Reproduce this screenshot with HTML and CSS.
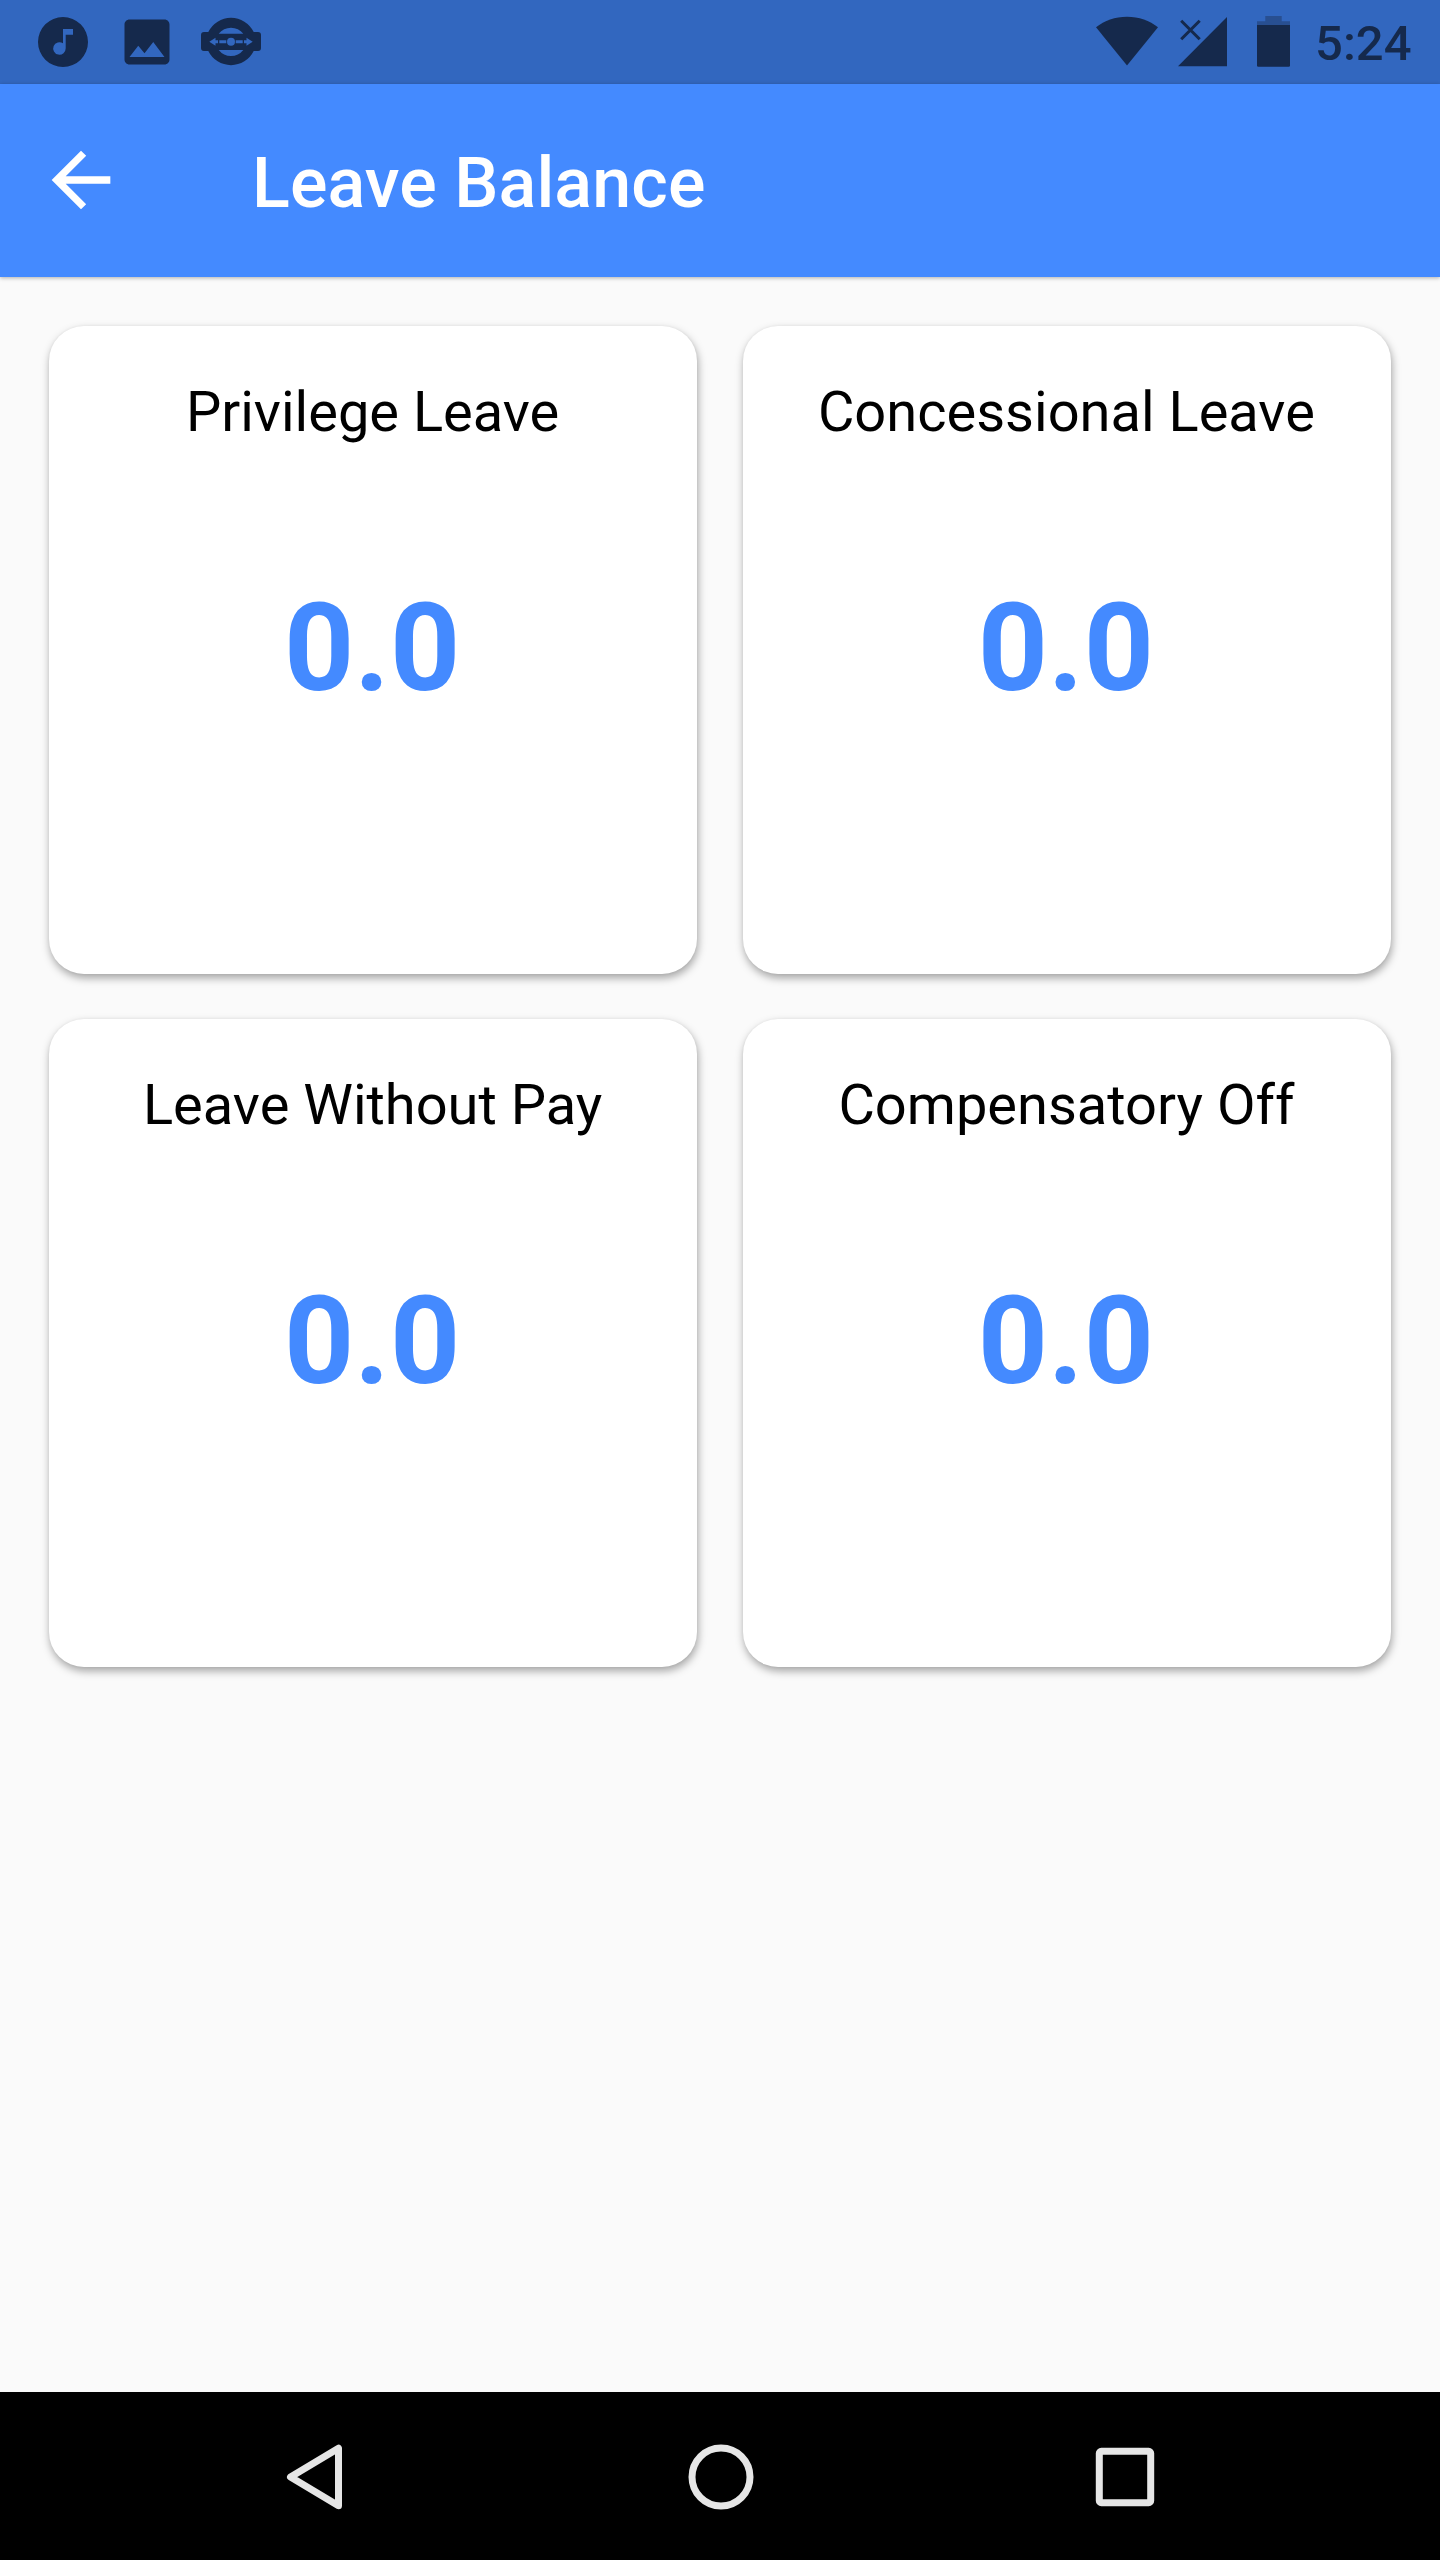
FILE: index.html
```html
<!DOCTYPE html>
<html lang="en">
<head>
<meta charset="utf-8">
<title>Leave Balance</title>
<link rel="stylesheet" href="styles.css">
</head>
<body>
<div class="screen">
  <div class="status-bar">
    <div class="notifications">
      <svg width="60" height="60" viewBox="0 0 60 60"><path fill-rule="evenodd" d="M30 5a25 25 0 1 0 0 50a25 25 0 1 0 0-50zM30 17h10v5.8h-7.3V36.3A6.25 6.25 0 1 1 30 31.3z"/></svg>
      <svg width="60" height="60" viewBox="0 0 24 24"><path d="M21 19V5c0-1.1-.9-2-2-2H5c-1.100 0-2 .9-2 2v14c0 1.100.9 2 2 2h14c1.100 0 2-.9 2-2zM8.500 13.500l2.500 3.010L14.500 12l4.500 6H5l3.500-4.500z"/></svg>
      <svg width="60" height="60" viewBox="0 0 60 60"><path fill-rule="evenodd" d="M7.300 20A25.300 25.300 0 0 1 52.700 20H57a3 3 0 0 1 3 3V36a3 3 0 0 1-3 3H52.700A25.300 25.300 0 0 1 7.300 39H3a3 3 0 0 1-3-3V23a3 3 0 0 1 3-3zM17.700 21.700H42.300A15.500 15.500 0 0 0 17.700 21.700zM17.700 38H42.300A15.500 15.500 0 0 1 17.700 38z"/><g class="cutout"><path d="M8.300 29.700l6.200-4v2.500h2.500v3h-2.500v2.500zM51.700 29.700l-6.200-4v2.500h-2.500v3h2.500v2.500zM18.300 28.200h7v3h-7zM34.700 28.200h7v3h-7z"/><circle cx="30" cy="29.700" r="4"/></g></svg>
    </div>
    <div class="indicators">
      <svg width="62" height="50" viewBox="0 0 62 50"><path d="M31 49.500L0 11.200C8.500 4.500 19 .7 31 .7S53.500 4.500 62 11.200z"/></svg>
      <svg class="signal" width="49" height="50" viewBox="0 0 49 50"><path d="M49 0V49.300H0z"/><path class="cross" d="M3.200 3.800L21.700 22.300M21.700 3.800L3.200 22.300"/></svg>
      <svg class="battery" width="33" height="51" viewBox="0 0 33 51"><path class="drained" d="M8.300 0H24.700V5.300H33V9H0V5.300H8.300z"/><path d="M0 9H33V49.500a1.300 1.300 0 0 1-1.300 1.300H1.300A1.300 1.300 0 0 1 0 49.500z"/></svg>
      <span class="clock">5:24</span>
    </div>
  </div>
  <header class="app-bar">
    <svg class="back" width="88" height="88" viewBox="0 0 24 24"><path d="M20 11H7.830l5.590-5.590L12 4l-8 8 8 8 1.410-1.410L7.830 13H20v-2z"/></svg>
    <h1 class="title">Leave Balance</h1>
  </header>
  <main class="balances">
    <section class="card"><h2 class="label">Privilege Leave</h2><p class="value">0.0</p></section>
    <section class="card"><h2 class="label">Concessional Leave</h2><p class="value">0.0</p></section>
    <section class="card"><h2 class="label">Leave Without Pay</h2><p class="value">0.0</p></section>
    <section class="card"><h2 class="label">Compensatory Off</h2><p class="value">0.0</p></section>
  </main>
  <nav class="nav-bar">
    <svg width="66" height="66" viewBox="0 0 66 66"><path d="M55.500 4.300V61.700L7.500 33z"/></svg>
    <svg width="66" height="66" viewBox="0 0 66 66"><circle cx="33" cy="33" r="29"/></svg>
    <svg width="66" height="66" viewBox="0 0 66 66"><rect x="7.300" y="7.300" width="51.400" height="51.400" rx="2"/></svg>
  </nav>
</div>
</body>
</html>
```
FILE: styles.css
```css
* {
  box-sizing: border-box;
  margin: 0;
}

body {
  background: #fafafa;
  font-family: Roboto, sans-serif;
}

svg {
  display: block;
  flex: none;
}

.screen {
  display: flex;
  flex-direction: column;
  width: 1440px;
  height: 2560px;
}

.status-bar {
  display: flex;
  justify-content: space-between;
  height: 84px;
  padding: 12px 28.5px 0 33px;
  background: #3267bf;
  color: #15294c;
  fill: #15294c;
}

.notifications {
  display: flex;
  gap: 24px;
}

.cutout {
  fill: #3267bf;
}

.indicators {
  display: flex;
  align-items: flex-start;
  padding-top: 4px;
}

.signal {
  margin: 1px 0 0 20px;
}

.cross {
  fill: none;
  stroke: #15294c;
  stroke-width: 3;
}

.battery {
  margin: 0 25px 0 30px;
}

.drained {
  fill: #284f91;
}

.clock {
  font-size: 49px;
  font-weight: 500;
  line-height: 56px;
}

.app-bar {
  display: flex;
  align-items: center;
  gap: 127.5px;
  height: 192.5px;
  padding-left: 36.5px;
  background: #448aff;
  color: #fff;
  fill: #fff;
  box-shadow: 0 1px 4px rgba(0, 0, 0, .3);
}

.title {
  padding-top: 6px;
  font-size: 70px;
  font-weight: 500;
  letter-spacing: .1px;
  line-height: 82px;
}

.balances {
  display: grid;
  grid-template-columns: repeat(2, 648.25px);
  grid-auto-rows: 648px;
  flex: 1;
  align-content: start;
  gap: 45.5px;
  padding: 49px 49px 0;
}

.card {
  padding: 53px 1px 0 0;
  border-radius: 35px;
  background: #fff;
  box-shadow: 1px 4px 8px rgba(0, 0, 0, .35), 0 0 3px rgba(0, 0, 0, .04);
  text-align: center;
}

.label {
  color: #000;
  font-size: 56px;
  font-weight: 400;
  line-height: 66px;
}

.value {
  margin-top: 131px;
  padding-right: 1px;
  color: #448aff;
  font-size: 122.5px;
  font-weight: 700;
  line-height: 144px;
}

.nav-bar {
  display: flex;
  justify-content: space-between;
  height: 168px;
  padding: 51.5px 282px 0 283px;
  background: #000;
  fill: none;
  stroke: #e6e6e6;
  stroke-width: 7;
  stroke-linejoin: round;
}
```
